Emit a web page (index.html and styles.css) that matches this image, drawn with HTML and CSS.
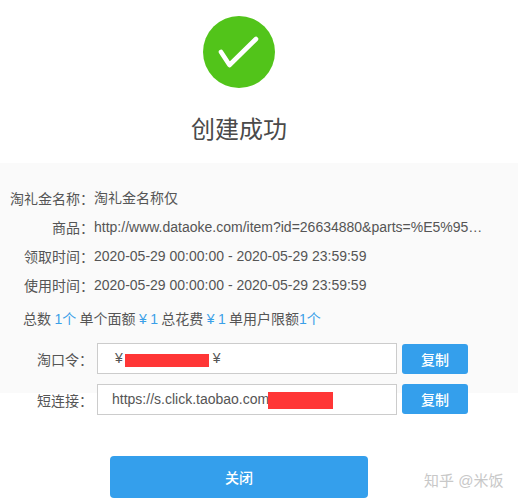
FILE: index.html
```html
<!DOCTYPE html>
<html lang="zh">
<head>
<meta charset="utf-8">
<title>创建成功</title>
<link rel="stylesheet" href="styles.css">
</head>
<body>
<div class="page">
  <header class="head">
    <svg class="check" width="72" height="72" viewBox="0 0 72 72" aria-hidden="true">
      <circle cx="36" cy="36" r="36" fill="#52c41a"/>
      <path d="M18 36 L26.5 49 L53 23" fill="none" stroke="#fff" stroke-width="4.6" stroke-linecap="round" stroke-linejoin="round"/>
    </svg>
    <h1 class="title">创建成功</h1>
  </header>
  <section class="panel">
    <div class="row"><span class="label">淘礼金名称<span class="colon">：</span></span><span class="value">淘礼金名称仅</span></div>
    <div class="row"><span class="label">商品<span class="colon">：</span></span><span class="value">http://www.dataoke.com/item?id=26634880&amp;parts=%E5%95…</span></div>
    <div class="row"><span class="label">领取时间<span class="colon">：</span></span><span class="value">2020-05-29 00:00:00 - 2020-05-29 23:59:59</span></div>
    <div class="row"><span class="label">使用时间<span class="colon">：</span></span><span class="value">2020-05-29 00:00:00 - 2020-05-29 23:59:59</span></div>
    <p class="summary">总数 <em>1个</em> 单个面额 <em>¥ 1</em> 总花费 <em>¥ 1</em> 单用户限额<em>1个</em></p>
    <div class="field">
      <span class="field-label">淘口令<span class="colon">：</span></span>
      <div class="box box-code">¥<span class="gap"></span>¥<i class="redact redact-code"></i></div>
      <button class="copy copy-low" type="button">复制</button>
    </div>
    <div class="field">
      <span class="field-label">短连接<span class="colon">：</span></span>
      <div class="box">https://s.click.taobao.com<i class="redact redact-link"></i></div>
      <button class="copy copy-high" type="button">复制</button>
    </div>
  </section>
  <button class="close" type="button">关闭</button>
  <div class="mark">知乎 @米饭</div>
</div>
</body>
</html>
```
FILE: styles.css
```css
* { box-sizing: border-box; }
html, body { margin: 0; padding: 0; background: #fff; }
body {
  font-family: "Liberation Sans", "Noto Sans CJK SC", sans-serif;
  font-size: 14px;
  color: #555;
}
.page { position: relative; width: 518px; height: 504px; overflow: hidden; }
.head {
  display: flex;
  flex-direction: column;
  align-items: center;
  width: 478px;
  height: 163px;
  padding-top: 16px;
}
.check { display: block; flex: none; }
.title {
  margin: 24px 0 0;
  font-size: 24px;
  line-height: 36px;
  font-weight: 400;
  color: #4a4a4a;
}
.panel {
  height: 230px;
  padding-top: 21px;
  background: #fafafa;
}
.row {
  display: flex;
  height: 29px;
  line-height: 29px;
  white-space: nowrap;
}
.label { flex: none; width: 94px; text-align: right; }
.colon { font-family: "Noto Sans CJK TC", sans-serif; }
.value { flex: none; }
.summary {
  margin: 5px 0 0 23px;
  height: 38px;
  line-height: 29px;
  white-space: nowrap;
  word-spacing: -0.5px;
}
.summary em { font-style: normal; color: #3aa0e8; }
.field {
  display: flex;
  align-items: center;
  height: 31px;
  margin-bottom: 10px;
}
.field-label { flex: none; width: 97px; padding-left: 37px; white-space: nowrap; }
.box {
  position: relative;
  flex: none;
  width: 300px;
  height: 31px;
  padding-left: 14px;
  line-height: 29px;
  background: #fff;
  border: 1px solid #ccc;
  white-space: nowrap;
}
.box-code { padding-left: 17px; }
.gap { display: inline-block; width: 90px; }
.redact { position: absolute; display: block; background: #ff3636; }
.redact-code { left: 27px; top: 10px; width: 84px; height: 13px; }
.redact-link { left: 170px; top: 7px; width: 65px; height: 17px; }
.copy {
  flex: none;
  width: 66px;
  height: 30px;
  margin-left: 5px;
  padding: 0;
  border: 0;
  border-radius: 3px;
  background: #349fec;
  color: #fff;
  font: 500 14px "Liberation Sans", "Noto Sans CJK SC", sans-serif;
}
.copy-low { align-self: flex-end; }
.copy-high { align-self: flex-start; }
.close {
  display: block;
  width: 258px;
  height: 42px;
  margin: 63px 0 0 110px;
  padding: 0;
  border: 0;
  border-radius: 4px;
  background: #349fec;
  color: #fff;
  font: 500 14px "Liberation Sans", "Noto Sans CJK SC", sans-serif;
}
.mark {
  position: absolute;
  left: 424px;
  top: 469px;
  font-size: 15px;
  line-height: 24px;
  color: #c8c8c8;
  white-space: nowrap;
}
```
